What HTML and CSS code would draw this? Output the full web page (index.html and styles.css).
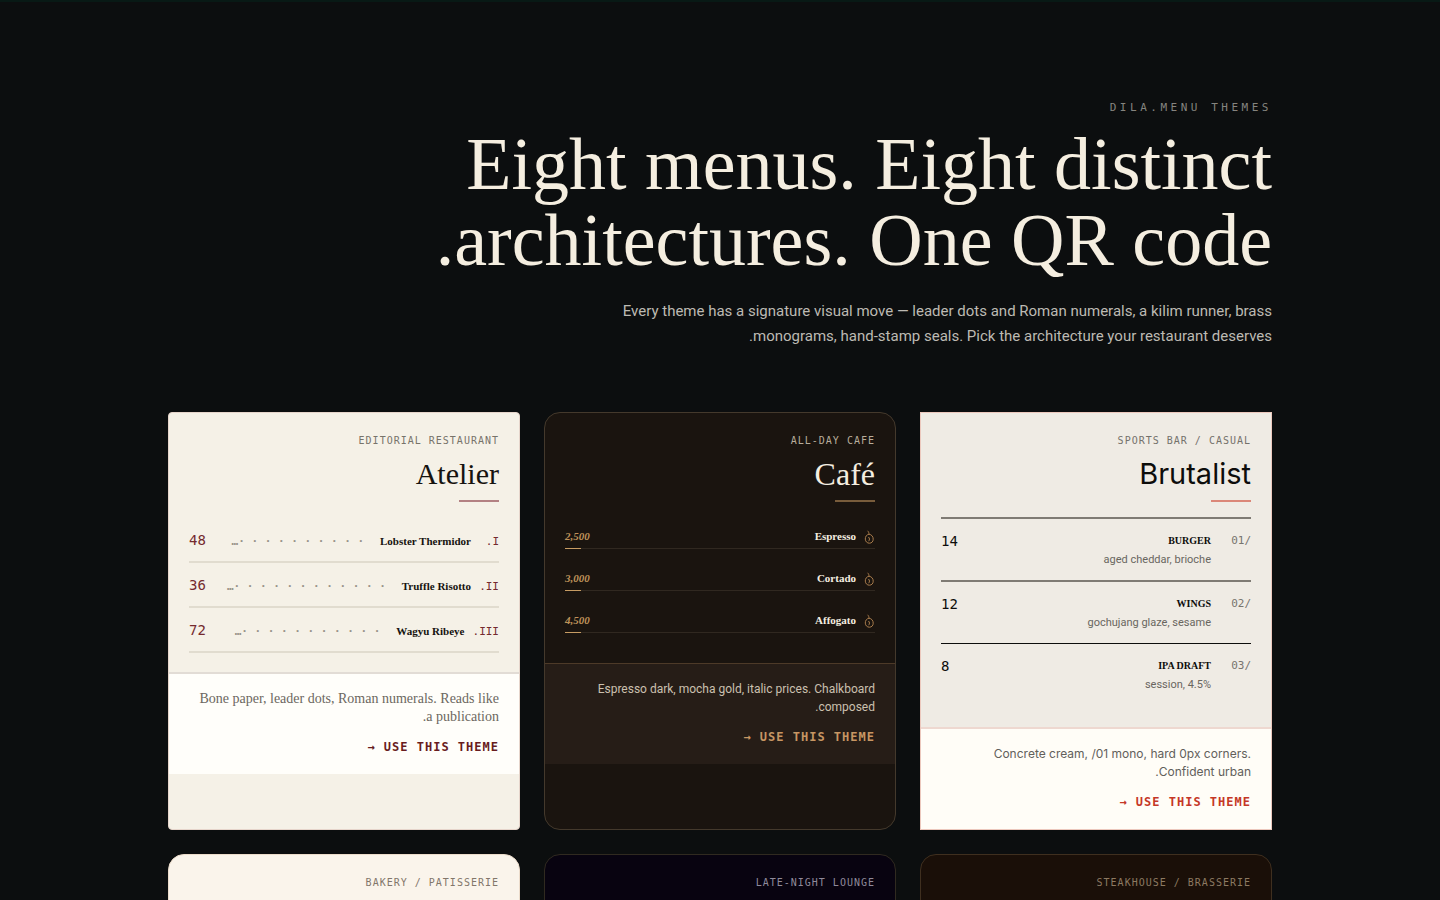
FILE: index.html
```html
<!DOCTYPE html>
<html lang="en" dir="rtl">
<head>
    <meta charset="UTF-8">
    <meta name="viewport" content="width=device-width, initial-scale=1.0">
    <title>dila.menu themes</title>
    <link rel="stylesheet" href="styles.css">
</head>
<body>
    <main class="page">
        <header class="hero">
            <p class="hero-label">DILA.MENU THEMES</p>
            <h1 class="hero-title">Eight menus. Eight distinct architectures. One QR code.</h1>
            <p class="hero-text">Every theme has a signature visual move — leader dots and Roman numerals, a kilim runner, brass monograms, hand-stamp seals. Pick the architecture your restaurant deserves.</p>
        </header>

        <div class="themes">
            <article class="card brutalist">
                <div class="preview">
                    <p class="label">SPORTS BAR / CASUAL</p>
                    <h2 class="title">Brutalist</h2>
                    <ul class="items">
                        <li class="item">
                            <span class="num">/01</span>
                            <div class="dish">
                                <h3 class="name">BURGER</h3>
                                <p class="note">aged cheddar, brioche</p>
                            </div>
                            <span class="price">14</span>
                        </li>
                        <li class="item">
                            <span class="num">/02</span>
                            <div class="dish">
                                <h3 class="name">WINGS</h3>
                                <p class="note">gochujang glaze, sesame</p>
                            </div>
                            <span class="price">12</span>
                        </li>
                        <li class="item">
                            <span class="num">/03</span>
                            <div class="dish">
                                <h3 class="name">IPA DRAFT</h3>
                                <p class="note">session, 4.5%</p>
                            </div>
                            <span class="price">8</span>
                        </li>
                    </ul>
                </div>
                <div class="info">
                    <p class="desc">Concrete cream, /01 mono, hard 0px corners. Confident urban.</p>
                    <a class="use" href="#">USE THIS THEME →</a>
                </div>
            </article>

            <article class="card cafe">
                <div class="preview">
                    <p class="label">ALL-DAY CAFE</p>
                    <h2 class="title">Café</h2>
                    <ul class="items">
                        <li class="item">
                            <svg class="bean" viewBox="0 0 11 14"><path d="M5 4.2C2.4 4.8 1.2 6.8 1.3 9.1C1.4 11.6 3.2 13.2 5.4 13.2C7.7 13.2 9.2 11.5 9.2 9.2C9.2 6.7 7.8 4.6 5 4.2C5 3 4.6 1.8 3.6 0.8M4.4 7C5.8 8.2 5.8 9.9 4.6 11.2"/></svg>
                            <span class="name">Espresso</span>
                            <span class="price">2,500</span>
                        </li>
                        <li class="item">
                            <svg class="bean" viewBox="0 0 11 14"><path d="M5 4.2C2.4 4.8 1.2 6.8 1.3 9.1C1.4 11.6 3.2 13.2 5.4 13.2C7.7 13.2 9.2 11.5 9.2 9.2C9.2 6.7 7.8 4.6 5 4.2C5 3 4.6 1.8 3.6 0.8M4.4 7C5.8 8.2 5.8 9.9 4.6 11.2"/></svg>
                            <span class="name">Cortado</span>
                            <span class="price">3,000</span>
                        </li>
                        <li class="item">
                            <svg class="bean" viewBox="0 0 11 14"><path d="M5 4.2C2.4 4.8 1.2 6.8 1.3 9.1C1.4 11.6 3.2 13.2 5.4 13.2C7.7 13.2 9.2 11.5 9.2 9.2C9.2 6.7 7.8 4.6 5 4.2C5 3 4.6 1.8 3.6 0.8M4.4 7C5.8 8.2 5.8 9.9 4.6 11.2"/></svg>
                            <span class="name">Affogato</span>
                            <span class="price">4,500</span>
                        </li>
                    </ul>
                </div>
                <div class="info">
                    <p class="desc">Espresso dark, mocha gold, italic prices. Chalkboard composed.</p>
                    <a class="use" href="#">USE THIS THEME →</a>
                </div>
            </article>

            <article class="card atelier">
                <div class="preview">
                    <p class="label">EDITORIAL RESTAURANT</p>
                    <h2 class="title">Atelier</h2>
                    <ul class="items">
                        <li class="item">
                            <span class="num">I.</span>
                            <span class="name">Lobster Thermidor</span>
                            <span class="leader">· · · · · · · · · ·…</span>
                            <span class="price">48</span>
                        </li>
                        <li class="item">
                            <span class="num">II.</span>
                            <span class="name">Truffle Risotto</span>
                            <span class="leader">· · · · · · · · · · · ·…</span>
                            <span class="price">36</span>
                        </li>
                        <li class="item">
                            <span class="num">III.</span>
                            <span class="name">Wagyu Ribeye</span>
                            <span class="leader">· · · · · · · · · · ·…</span>
                            <span class="price">72</span>
                        </li>
                    </ul>
                </div>
                <div class="info">
                    <p class="desc">Bone paper, leader dots, Roman numerals. Reads like a publication.</p>
                    <a class="use" href="#">USE THIS THEME →</a>
                </div>
            </article>

            <article class="card steakhouse">
                <div class="preview">
                    <p class="label">STEAKHOUSE / BRASSERIE</p>
                </div>
            </article>

            <article class="card lounge">
                <div class="preview">
                    <p class="label">LATE-NIGHT LOUNGE</p>
                </div>
            </article>

            <article class="card bakery">
                <div class="preview">
                    <p class="label">BAKERY / PATISSERIE</p>
                </div>
            </article>
        </div>
    </main>
</body>
</html>
```
FILE: styles.css
```css
* {
    box-sizing: border-box;
    margin: 0;
    padding: 0;
}

:root {
    --serif: "Liberation Serif", serif;
    --sans: Inter, sans-serif;
    --mono: "DejaVu Sans Mono", monospace;
}

body {
    background: #0c0e0f;
    color: #f5eee0;
    font-family: var(--sans);
}

.page {
    height: 100vh;
    overflow: hidden;
    padding: 98px 24px 0;
    border-top: 2px solid #081915;
}

.hero,
.themes {
    max-width: 1104px;
    margin: 0 auto;
}

.hero-label {
    font: 11px/16px var(--mono);
    letter-spacing: 0.32em;
    color: #85847f;
}

.hero-title {
    max-width: 900px;
    margin-top: 10px;
    font: 400 74px/76px var(--serif);
    color: #f5eee0;
}

.hero-text {
    max-width: 680px;
    margin-top: 21px;
    font: 15px/25px Roboto, sans-serif;
    color: #bdbab3;
}

.themes {
    display: grid;
    grid-template-columns: repeat(3, 1fr);
    gap: 24px;
    margin-top: 63px;
}

/* cards */
.card {
    min-height: 200px;
    border: 1px solid #3d3225;
    border-radius: 16px;
    overflow: hidden;
}

.preview {
    padding: 20px 20px 19px;
}

.label {
    font: 10px/16px var(--mono);
    letter-spacing: 1px;
}

.title {
    margin-top: 7px;
    font: 400 30px/36px var(--serif);
}

.title::after {
    content: "";
    display: block;
    width: 40px;
    height: 2px;
    margin-top: 8px;
    background: var(--rule);
}

.items {
    margin-top: 16px;
    list-style: none;
}

.item {
    display: flex;
    gap: 8px;
}

.name {
    font: 700 11px/16px var(--serif);
}

.price {
    margin-right: auto;
}

.info {
    padding: 16px 20px 17px;
    border-top: 2px solid;
}

.desc {
    font-size: 12px;
    line-height: 18px;
}

.use {
    display: block;
    margin-top: 11px;
    font: 700 12px/20px var(--mono);
    letter-spacing: 1px;
    text-decoration: none;
}

/* atelier */
.atelier {
    --rule: #b38183;
    background: #f5f1e7;
    border-color: #e6d5cb;
    border-radius: 4px;
    color: #16130f;
}

.atelier .label {
    color: #77736a;
}

.atelier .item {
    align-items: baseline;
    height: 45px;
    padding-top: 14px;
    border-bottom: 2px solid #e1dccf;
}

.atelier .num {
    min-width: 20px;
    font: 11px/16px var(--mono);
    color: #742a2e;
}

.atelier .leader {
    padding-right: 8px;
    white-space: nowrap;
    font: 700 11px/16px var(--mono);
    color: #99948a;
}

.atelier .price {
    font: 14px/16px var(--mono);
    color: #742a2e;
}

.atelier .info {
    background: #fffefa;
    border-color: #e2dcd5;
}

.atelier .desc {
    max-width: 304px;
    font-family: var(--serif);
    font-size: 14px;
    color: #6c6760;
}

.atelier .use {
    color: #681c20;
}

/* cafe */
.cafe {
    --rule: #785c3b;
    background: #1a140f;
    border-color: #44392c;
}

.cafe .label {
    color: #b8ad9b;
}

.cafe .title {
    font-size: 32px;
}

.cafe .item {
    flex-wrap: wrap;
    align-content: flex-start;
    height: 42px;
    padding-top: 10px;
}

.cafe .item::after {
    content: "";
    width: 100%;
    height: 1px;
    margin-top: -4px;
    background: linear-gradient(to right, #c79c63 16px, #302820 16px);
}

.bean {
    width: 11px;
    height: 14px;
    margin-top: 2px;
    fill: none;
    stroke: #a87c4c;
    stroke-width: 1;
}

.cafe .price {
    font: italic 700 11px/16px var(--serif);
    color: #bd9159;
}

.cafe .info {
    background: #261d17;
    border-top: 1px solid #4d3a28;
}

.cafe .desc {
    font-family: Roboto, sans-serif;
    color: #cbc0af;
}

.cafe .use {
    color: #c79663;
}

/* brutalist */
.brutalist {
    --rule: #db8778;
    background: #efebe4;
    border-color: #ecc8bd;
    border-radius: 0;
    color: #0d0d0b;
}

.brutalist .preview {
    padding-bottom: 21px;
}

.brutalist .label {
    color: #74716b;
}

.brutalist .title {
    font-family: var(--sans);
    font-size: 29px;
}

.brutalist .items {
    margin-top: 15px;
}

.brutalist .item {
    padding: 14px 0 12px;
    border-top: 2px solid #7f7b74;
}

.brutalist .item:last-child {
    padding-bottom: 13px;
    border-top: 1px solid #0d0d0b;
}

.brutalist .num {
    width: 32px;
    font: 11px/16px var(--mono);
    color: #77746e;
}

.brutalist .name {
    font-size: 10px;
}

.brutalist .note {
    margin-top: 3px;
    font: 11px/16px Roboto, sans-serif;
    color: #69665f;
}

.brutalist .price {
    font: 14px/16px var(--mono);
}

.brutalist .info {
    background: #fffdf7;
    border-color: #eed8d0;
}

.brutalist .desc {
    color: #62605b;
}

.brutalist .use {
    color: #c53726;
}

/* second row */
.bakery {
    background: #faf4eb;
    border-color: #ecdccb;
    color: #82766a;
}

.lounge {
    background: #080310;
    border-color: #302a20;
    color: #8f8a9b;
}

.steakhouse {
    background: #1a0f08;
    border-color: #3f2f1f;
    color: #8c7a62;
}
```
